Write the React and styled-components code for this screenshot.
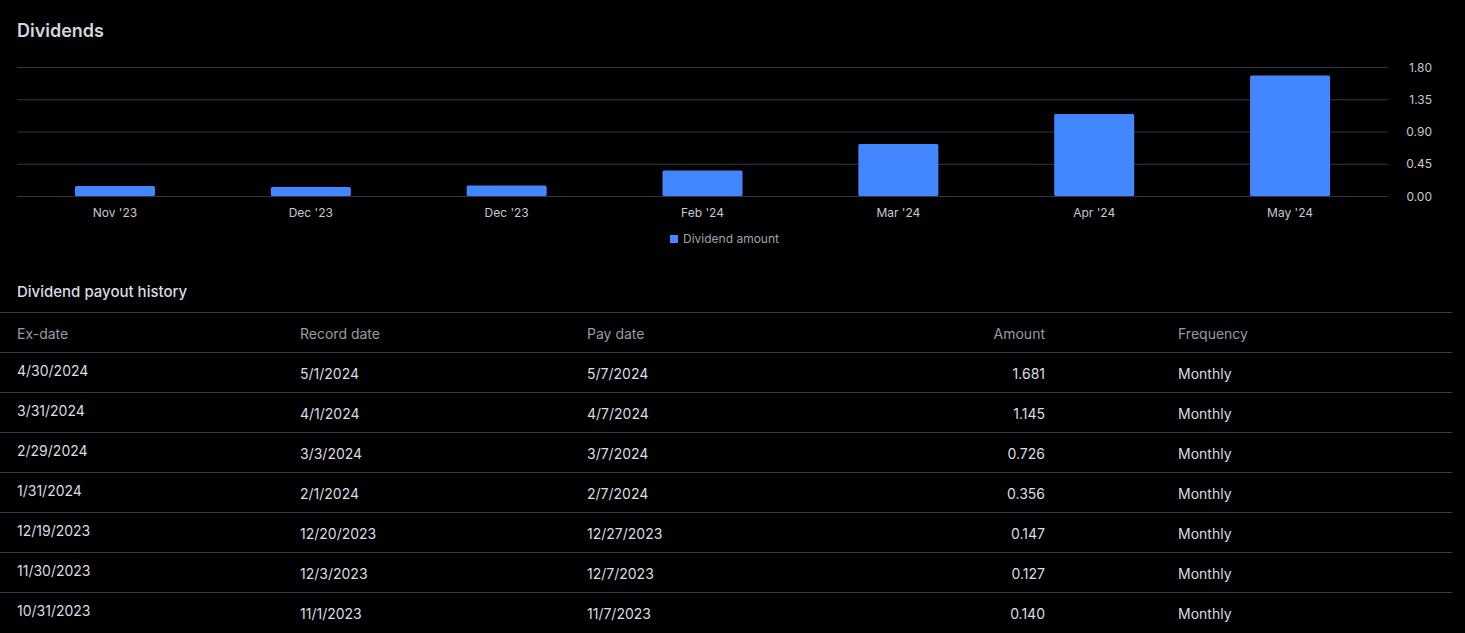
import React from "react";
import styled, { createGlobalStyle } from "styled-components";

const Global = createGlobalStyle`
  body { margin: 0; background: #000; font-family: Inter, "Noto Sans", sans-serif; }
`;

const Page = styled.div`
  width: 1465px;
  height: 633px;
  overflow: hidden;
  background: #000;
  padding-top: 19px;
  box-sizing: border-box;
`;

const Title = styled.h2`
  margin: 0 0 0 17px;
  font-size: 18px;
  font-weight: 600;
  color: #d6d6de;
  line-height: 24px;
`;

const ChartWrap = styled.div`
  margin-top: 14px;
  height: 174px;
`;

const Legend = styled.div`
  display: flex;
  align-items: center;
  justify-content: center;
  gap: 5px;
  margin-left: -16px;
  font-size: 12px;
  line-height: 16px;
  color: #a0a0aa;
`;

const Swatch = styled.span`
  width: 8px;
  height: 8px;
  background: #4287ff;
`;

const SubTitle = styled.h3`
  margin: 35px 0 0 17px;
  font-size: 15px;
  font-weight: 500;
  color: #dcdce2;
  line-height: 20px;
`;

const Table = styled.div`
  margin-top: 10px;
  width: 1452px;
`;

const Row = styled.div`
  display: grid;
  grid-template-columns: 283px 287px 313px 145px 1fr;
  padding-left: 17px;
  height: 40px;
  box-sizing: border-box;
  border-top: 1px solid #3a3a4a;
  font-size: 14px;
  color: ${p => (p.$head ? "#9a9aa6" : "#dcdce2")};
  align-items: center;
`;

const Cell = styled.div`
  text-align: ${p => (p.$right ? "right" : "left")};
  padding-left: ${p => (p.$pad ? "133px" : "0")};
  transform: translateY(${p => (p.$up ? "-2px" : "1px")});
`;

const data = [
  ["Nov '23", 0.14],
  ["Dec '23", 0.127],
  ["Dec '23", 0.147],
  ["Feb '24", 0.356],
  ["Mar '24", 0.726],
  ["Apr '24", 1.145],
  ["May '24", 1.681],
];

const rows = [
  ["4/30/2024", "5/1/2024", "5/7/2024", "1.681"],
  ["3/31/2024", "4/1/2024", "4/7/2024", "1.145"],
  ["2/29/2024", "3/3/2024", "3/7/2024", "0.726"],
  ["1/31/2024", "2/1/2024", "2/7/2024", "0.356"],
  ["12/19/2023", "12/20/2023", "12/27/2023", "0.147"],
  ["11/30/2023", "12/3/2023", "12/7/2023", "0.127"],
  ["10/31/2023", "11/1/2023", "11/7/2023", "0.140"],
];

function Chart() {
  const top = 10, bottom = 139, left = 17, right = 1388;
  const h = bottom - top;
  const slot = (right - left) / 7;
  const ticks = [1.8, 1.35, 0.9, 0.45, 0];
  return (
    <svg width="1465" height="174" style={{ display: "block" }}>
      {ticks.map(t => {
        const y = bottom - (t / 1.8) * h + 0.5;
        return (
          <g key={t}>
            <line x1={left} x2={right} y1={y} y2={y} stroke="#33334a" strokeWidth="1" />
            <text x="1432" y={y + 4} fontSize="12" fill="#c8c8d0" textAnchor="end" fontFamily="Inter, sans-serif">
              {t.toFixed(2)}
            </text>
          </g>
        );
      })}
      {data.map(([l, v], i) => {
        const cx = left + slot * (i + 0.5);
        const bh = (v / 1.8) * h;
        return (
          <g key={i}>
            <rect x={cx - 40} y={bottom - bh} width="80" height={bh} rx="1.5" fill="#4287ff" />
            <text x={cx} y={bottom + 21} fontSize="12" fill="#c8c8d0" textAnchor="middle" fontFamily="Inter, sans-serif">
              {l}
            </text>
          </g>
        );
      })}
    </svg>
  );
}

export default function App() {
  return (
    <Page>
      <Global />
      <Title>Dividends</Title>
      <ChartWrap>
        <Chart />
      </ChartWrap>
      <Legend>
        <Swatch />
        Dividend amount
      </Legend>
      <SubTitle>Dividend payout history</SubTitle>
      <Table>
        <Row $head>
          <Cell>Ex-date</Cell>
          <Cell>Record date</Cell>
          <Cell>Pay date</Cell>
          <Cell $right>Amount</Cell>
          <Cell $pad>Frequency</Cell>
        </Row>
        {rows.map(r => (
          <Row key={r[0]}>
            <Cell $up>{r[0]}</Cell>
            <Cell>{r[1]}</Cell>
            <Cell>{r[2]}</Cell>
            <Cell $right>{r[3]}</Cell>
            <Cell $pad>Monthly</Cell>
          </Row>
        ))}
      </Table>
    </Page>
  );
}
